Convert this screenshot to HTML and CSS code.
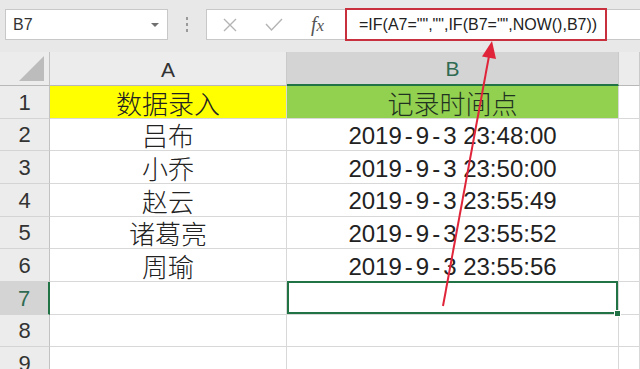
FILE: index.html
```html
<!DOCTYPE html>
<html lang="zh-CN">
<head>
    <meta charset="UTF-8">
    <meta name="viewport" content="width=device-width, initial-scale=1.0">
    <title>记录时间点</title>
    <link rel="stylesheet" href="styles.css">
</head>
<body>
<div class="toolbar">
    <div class="namebox">
        <span class="name">B7</span>
        <span class="caret"></span>
    </div>
    <div class="grip"><i></i><i></i><i></i></div>
    <div class="fbar">
        <div class="fbtns">
            <svg class="ico" width="14" height="14" viewBox="0 0 14 14">
                <path d="M1 1 L13 13 M13 1 L1 13" stroke="#b4b4b4" stroke-width="1.4" fill="none"/>
            </svg>
            <svg class="ico" width="18" height="14" viewBox="0 0 18 14">
                <path d="M1 6 L6.5 12 L17 1" stroke="#b4b4b4" stroke-width="1.4" fill="none"/>
            </svg>
            <span class="fx">f<span class="x">x</span></span>
        </div>
        <div class="formula">=IF(A7="","",IF(B7="",NOW(),B7))</div>
    </div>
</div>

<div class="sheet">
    <div class="corner"><span class="tri"></span></div>
    <div class="colhead">A</div>
    <div class="colhead sel">B</div>
    <div class="colhead"></div>

    <div class="rowhead">1</div>
    <div class="cell cn yellow">数据录入</div>
    <div class="cell cn green">记录时间点</div>
    <div class="cell"></div>

    <div class="rowhead">2</div>
    <div class="cell cn">吕布</div>
    <div class="cell">2019<span class="dash">-</span>9<span class="dash">-</span>3 23:48:00</div>
    <div class="cell"></div>

    <div class="rowhead">3</div>
    <div class="cell cn">小乔</div>
    <div class="cell">2019<span class="dash">-</span>9<span class="dash">-</span>3 23:50:00</div>
    <div class="cell"></div>

    <div class="rowhead">4</div>
    <div class="cell cn">赵云</div>
    <div class="cell">2019<span class="dash">-</span>9<span class="dash">-</span>3 23:55:49</div>
    <div class="cell"></div>

    <div class="rowhead">5</div>
    <div class="cell cn">诸葛亮</div>
    <div class="cell">2019<span class="dash">-</span>9<span class="dash">-</span>3 23:55:52</div>
    <div class="cell"></div>

    <div class="rowhead">6</div>
    <div class="cell cn">周瑜</div>
    <div class="cell">2019<span class="dash">-</span>9<span class="dash">-</span>3 23:55:56</div>
    <div class="cell"></div>

    <div class="rowhead sel">7</div>
    <div class="cell"></div>
    <div class="cell active"><span class="handle"></span></div>
    <div class="cell"></div>

    <div class="rowhead">8</div>
    <div class="cell"></div>
    <div class="cell"></div>
    <div class="cell"></div>

    <div class="rowhead">9</div>
    <div class="cell"></div>
    <div class="cell"></div>
    <div class="cell"></div>
</div>

<!-- annotation arrow drawn over the sheet -->
<svg class="arrow" width="640" height="369" viewBox="0 0 640 369">
    <line x1="443" y1="306" x2="489" y2="56" stroke="#e0253a" stroke-width="2"/>
    <polygon points="492,41 482,56.5 496,59" fill="#e0253a"/>
</svg>
</body>
</html>
```

FILE: styles.css
```css
body {
    margin: 0;
    width: 640px;
    height: 369px;
    overflow: hidden;
    position: relative;
    background-color: #ffffff;
    font-family: "Liberation Sans", "Noto Sans CJK SC", sans-serif;
    color: #222222;
}
.toolbar {
    height: 52px;
    background-color: #e8e8e8;
    display: flex;
    align-items: flex-start;
    padding-top: 9px;
    box-sizing: border-box;
}
.namebox {
    margin-left: 5px;
    width: 163px;
    height: 31px;
    background-color: #ffffff;
    border: 1px solid #c8c8c8;
    box-sizing: border-box;
    display: flex;
    align-items: center;
    justify-content: space-between;
    padding: 0 8px 0 7px;
}
.namebox .name {
    font-size: 16px;
    color: #333333;
}
.caret {
    width: 0;
    height: 0;
    border-left: 4px solid transparent;
    border-right: 4px solid transparent;
    border-top: 4px solid #707070;
}
.grip {
    width: 38px;
    height: 31px;
    display: flex;
    flex-direction: column;
    align-items: center;
    justify-content: center;
    gap: 3px;
}
.grip i {
    display: block;
    width: 2px;
    height: 3px;
    background-color: #9a9a9a;
}
.fbar {
    flex: 1;
    height: 31px;
    background-color: #ffffff;
    border: 1px solid #c8c8c8;
    border-right: none;
    box-sizing: border-box;
    display: flex;
    align-items: center;
}
.fbtns {
    width: 138px;
    display: flex;
    align-items: center;
    padding-left: 16px;
    box-sizing: border-box;
}
.fbtns .ico {
    margin-right: 28px;
}
.fx {
    font-family: "Liberation Serif", serif;
    font-style: italic;
    font-size: 20px;
    color: #555555;
}
.fx .x {
    font-size: 17px;
}
.formula {
    width: 262px;
    height: 33px;
    margin: -1px 0;
    border: 2px solid #c8303e;
    box-sizing: border-box;
    font-size: 16px;
    color: #222222;
    display: flex;
    align-items: center;
    padding-left: 12px;
}

.sheet {
    display: grid;
    grid-template-columns: 50px 237px 332px 21px;
    grid-template-rows: 34px repeat(9, 32.67px);
}
.corner {
    background-color: #ececec;
    border-right: 1px solid #c2c2c2;
    border-bottom: 1px solid #b8b8b8;
    box-sizing: border-box;
    position: relative;
}
.tri {
    position: absolute;
    right: 5px;
    bottom: 4px;
    width: 0;
    height: 0;
    border-left: 25px solid transparent;
    border-bottom: 25px solid #bcbcbc;
}
.colhead {
    background-color: #ececec;
    border-right: 1px solid #cacaca;
    border-bottom: 1px solid #b8b8b8;
    box-sizing: border-box;
    display: flex;
    align-items: center;
    justify-content: center;
    font-size: 21px;
    color: #333333;
    padding-top: 2px;
}
.colhead.sel {
    background-color: #d4d4d4;
    color: #2f6b53;
    border-bottom: 2px solid #217346;
}
.rowhead {
    background-color: #ececec;
    border-right: 1px solid #c2c2c2;
    border-bottom: 1px solid #d4d4d4;
    box-sizing: border-box;
    display: flex;
    align-items: center;
    justify-content: center;
    font-size: 22px;
    color: #333333;
    padding-top: 2px;
}
.rowhead.sel {
    background-color: #d4d4d4;
    color: #2f6b53;
    border-right: 2px solid #217346;
}
.cell {
    border-right: 1px solid #d8d8d8;
    border-bottom: 1px solid #d8d8d8;
    box-sizing: border-box;
    display: flex;
    align-items: center;
    justify-content: center;
    font-size: 24px;
    padding-top: 3px;
    white-space: nowrap;
}
.cell.cn {
    font-size: 26px;
    font-weight: 300;
    padding-top: 1px;
}
.dash {
    margin: 0 3px;
}
.yellow {
    background-color: #ffff00;
}
.green {
    background-color: #92d050;
    color: #1f3320;
}
.active {
    position: relative;
}
.active::after {
    content: "";
    position: absolute;
    top: -1px;
    left: 0;
    right: 0;
    bottom: 0;
    border: 2px solid #217346;
}
.handle {
    position: absolute;
    right: -3px;
    bottom: -3px;
    width: 5px;
    height: 5px;
    background-color: #217346;
    border: 1px solid #ffffff;
    z-index: 2;
}
.arrow {
    position: absolute;
    top: 0;
    left: 0;
    pointer-events: none;
}
```
